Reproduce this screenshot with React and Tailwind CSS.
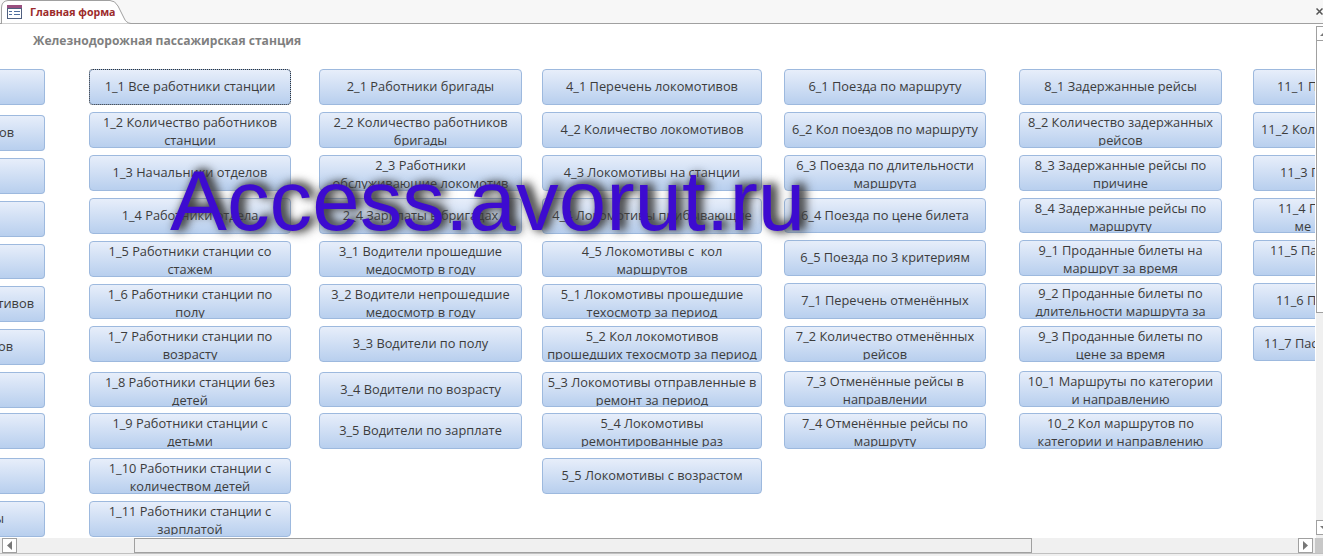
import React from "react";

const columns = [
  {
    width: "w-[202px]",
    items: [
      { lines: ["1_1 Все работники станции"], focus: true },
      { lines: ["1_2 Количество работников", "станции"] },
      { lines: ["1_3 Начальники отделов"] },
      { lines: ["1_4 Работники отдела"] },
      { lines: ["1_5 Работники станции со", "стажем"] },
      { lines: ["1_6 Работники станции по", "полу"], h: "h-[35px]" },
      { lines: ["1_7 Работники станции по", "возрасту"] },
      { lines: ["1_8 Работники станции без", "детей"], h: "h-[35px]", mt: "mt-[3px]" },
      { lines: ["1_9 Работники станции с", "детьми"], mt: "mt-[-1px]" },
      { lines: ["1_10 Работники станции с", "количеством детей"], mt: "mt-[2px]" },
      { lines: ["1_11 Работники станции с", "зарплатой"] },
    ],
  },
  {
    width: "w-[203px]",
    items: [
      { lines: ["2_1 Работники бригады"] },
      { lines: ["2_2 Количество работников", "бригады"] },
      { lines: ["2_3 Работники", "обслуживающие локомотив"] },
      { lines: ["2_4 Зарплаты в бригадах"] },
      { lines: ["3_1 Водители прошедшие", "медосмотр в году"] },
      { lines: ["3_2 Водители непрошедшие", "медосмотр в году"], h: "h-[35px]" },
      { lines: ["3_3 Водители по полу"] },
      { lines: ["3_4 Водители по возрасту"], h: "h-[35px]", mt: "mt-[3px]" },
      { lines: ["3_5 Водители по зарплате"], mt: "mt-[-1px]" },
    ],
  },
  {
    width: "w-[220px]",
    items: [
      { lines: ["4_1 Перечень локомотивов"] },
      { lines: ["4_2 Количество локомотивов"] },
      { lines: ["4_3 Локомотивы на станции"] },
      { lines: ["4_4 Локомотивы прибывающие"] },
      { lines: ["4_5 Локомотивы с  кол", "маршрутов"] },
      { lines: ["5_1 Локомотивы прошедшие", "техосмотр за период"], h: "h-[35px]" },
      { lines: ["5_2 Кол локомотивов", "прошедших техосмотр за период"] },
      { lines: ["5_3 Локомотивы отправленные в", "ремонт за период"], h: "h-[35px]", mt: "mt-[3px]" },
      { lines: ["5_4 Локомотивы", "ремонтированные раз"], mt: "mt-[-1px]" },
      { lines: ["5_5 Локомотивы с возрастом"], mt: "mt-[2px]" },
    ],
  },
  {
    width: "w-[202px]",
    items: [
      { lines: ["6_1 Поезда по маршруту"] },
      { lines: ["6_2 Кол поездов по маршруту"] },
      { lines: ["6_3 Поезда по длительности", "маршрута"] },
      { lines: ["6_4 Поезда по цене билета"], h: "h-[35px]" },
      { lines: ["6_5 Поезда по 3 критериям"] },
      { lines: ["7_1 Перечень отменённых"] },
      { lines: ["7_2 Количество отменённых", "рейсов"] },
      { lines: ["7_3 Отменённые рейсы в", "направлении"], mt: "mt-[2px]" },
      { lines: ["7_4 Отменённые рейсы по", "маршруту"], mt: "mt-[-1px]" },
    ],
  },
  {
    width: "w-[203px]",
    items: [
      { lines: ["8_1 Задержанные рейсы"] },
      { lines: ["8_2 Количество задержанных", "рейсов"] },
      { lines: ["8_3 Задержанные рейсы по", "причине"] },
      { lines: ["8_4 Задержанные рейсы по", "маршруту"], h: "h-[35px]" },
      { lines: ["9_1 Проданные билеты на", "маршрут за время"] },
      { lines: ["9_2 Проданные билеты по", "длительности маршрута за"] },
      { lines: ["9_3 Проданные билеты по", "цене за время"] },
      { lines: ["10_1 Маршруты по категории", "и направлению"], mt: "mt-[2px]" },
      { lines: ["10_2 Кол маршрутов по", "категории и направлению"], mt: "mt-[-1px]" },
    ],
  },
];

// part of the last column is scrolled out of view, only the visible start is kept
const lastColumn = [
  { lines: ["11_1 П"], pl: "pl-[23px]" },
  { lines: ["11_2 Кол"], pl: "pl-[7px]" },
  { lines: ["11_3 П"], pl: "pl-[26px]" },
  { lines: ["11_4 П", "     ме"], pl: "pl-[24px]", h: "h-[35px]" },
  { lines: ["11_5 Па", " "], pl: "pl-[16px]" },
  { lines: ["11_6 П"], pl: "pl-[22px]" },
  { lines: ["11_7 Пас"], pl: "pl-[10px]", h: "h-[35px]" },
];

// same for the first column, only the end of each label is in view
const firstColumn = [
  { text: "", h: "h-9" },
  { text: "ов", pr: "pr-[30px]", h: "h-9", mt: "mt-[3px]" },
  { text: "", h: "h-9" },
  { text: "", h: "h-9" },
  { text: "", h: "h-[35px]" },
  { text: "тивов", pr: "pr-[10px]", h: "h-9" },
  { text: "ов", pr: "pr-[31px]", h: "h-9" },
  { text: "", h: "h-9" },
  { text: "", h: "h-9", mt: "mt-[-2px]" },
  { text: "", h: "h-9", mt: "mt-[2px]" },
  { text: "ы", pr: "pr-[40px]", h: "h-9" },
];

const btn =
  "border border-[#9db9de] rounded-[4px] bg-gradient-to-b from-[#e7eefa] to-[#b8cfee] text-[#3c3c3c] shrink-0";

const FormButton = ({ lines, focus, h = "h-9", mt = "" }) => {
  return (
    <div className={`${btn} ${h} ${mt} relative w-full`}>
      {focus && (
        <div className="absolute inset-[-1px] border border-dotted border-[#333] rounded-[4px]" />
      )}
      <div
        className={`overflow-hidden text-center whitespace-pre leading-[18px] flex flex-col ${
          lines.length === 1 ? "justify-center h-full pb-[2px]" : "h-[33px]"
        }`}
      >
        {lines.map((line) => (
          <div key={line} className="shrink-0">{line}</div>
        ))}
      </div>
    </div>
  );
};

const TabBar = () => {
  return (
    <div className="h-6 shrink-0 bg-[#f7f7f7] border-b border-[#a0a0a0] relative">
      <svg className="absolute left-0 top-0" width="134" height="24" viewBox="0 0 134 24">
        <path
          d="M1.5 24 V8 Q1.5 1 8 .5 H110 Q115 .5 118 6 L124 18 Q126 23 131 23.5 V24 Z"
          fill="#fff"
          stroke="#a0a0a0"
        />
        <rect x="7.5" y="8.5" width="14" height="10" fill="#fff" stroke="#4f5f7f" />
        <rect x="7" y="5" width="15" height="3" fill="#9a4f7f" />
        <path d="M9 11.5h3M9 14.5h3M14 11.5h6M14 14.5h6" stroke="#4f6f9f" />
      </svg>
      <span className="absolute left-[30px] top-[4px] text-[10.6px] leading-[16px] font-bold text-[#9c2b2b] font-['Open_Sans',sans-serif]">
        Главная форма
      </span>
      <svg className="absolute left-[1316px] top-[8px]" width="7" height="7" viewBox="0 0 7 7">
        <path d="M.5 .5l6 6M6.5 .5l-6 6" stroke="#555" strokeWidth="1.5" />
      </svg>
    </div>
  );
};

const Arrow = ({ d, className }) => (
  <svg className={className} width="15" height="15" viewBox="0 0 15 15">
    <path d={d} fill="#777" />
  </svg>
);

const App = () => {
  return (
    <div className="w-[1323px] h-[556px] bg-white overflow-hidden flex flex-col font-['Open_Sans',sans-serif] text-[12.8px] relative">
      <TabBar />

      <div className="flex h-[514px] shrink-0">
        <div className="w-[1316px] overflow-hidden shrink-0">
          <h1 className="pl-[33px] pt-[8px] h-[45px] text-[12.1px] leading-[18px] font-bold text-[#7f7f7f]">
            Железнодорожная пассажирская станция
          </h1>
          <div className="flex">
            <div className="w-[45px] shrink-0 flex flex-col gap-[7px]">
              {firstColumn.map((item, i) => (
                <div
                  key={i}
                  className={`${btn} ${item.h} ${item.mt || ""} ${item.pr || ""} border-l-0 rounded-l-none flex items-center justify-end leading-[18px] pb-[2px]`}
                >
                  {item.text}
                </div>
              ))}
            </div>
            <div className="flex ml-[44px] gap-[28px]">
              {columns.map((col, i) => (
                <div
                  key={i}
                  className={`${col.width} shrink-0 flex flex-col gap-[7px] ${
                    i === 2 ? "ml-[-8px]" : i === 3 ? "ml-[-6px]" : i === 4 ? "ml-[5px]" : ""
                  }`}
                >
                  {col.items.map((item) => (
                    <FormButton key={item.lines[0]} {...item} />
                  ))}
                </div>
              ))}
            </div>
            <div className="ml-[31px] w-[62px] shrink-0 flex flex-col gap-[7px]">
              {lastColumn.map((item) => (
                <div
                  key={item.lines[0]}
                  className={`${btn} ${item.h || "h-9"} ${item.pl} border-r-0 rounded-r-none whitespace-pre leading-[18px] overflow-hidden flex flex-col ${
                    item.lines.length === 1 ? "justify-center pb-[2px]" : ""
                  }`}
                >
                  {item.lines.map((line) => (
                    <div key={line}>{line}</div>
                  ))}
                </div>
              ))}
            </div>
          </div>
        </div>

        <div className="flex-1 flex flex-col">
          <div className="h-[2px] bg-white" />
          <div className="h-[15px] bg-white border border-[#a0a0a0] border-r-0 relative overflow-hidden">
            <Arrow d="M3 9 L7 5 V9 Z" className="absolute left-0 top-0" />
          </div>
          <div className="h-[272px] bg-white border border-t-0 border-[#a0a0a0] border-r-0" />
          <div className="flex-1 bg-[#f0f0f0]" />
          <div className="h-[15px] bg-white border border-[#a0a0a0] border-r-0 relative overflow-hidden">
            <Arrow d="M3 5 H7 V9 Z" className="absolute left-0 top-0" />
          </div>
          <div className="h-[3px] bg-[#f0f0f0]" />
        </div>
      </div>

      <div className="h-[15px] shrink-0 bg-[#f0f0f0] flex items-stretch">
        <div className="w-[15px] ml-[2px] bg-white border border-[#a0a0a0] flex items-center justify-center">
          <svg width="5" height="9" viewBox="0 0 5 9">
            <path d="M5 0 V9 L0 4.5 Z" fill="#777" />
          </svg>
        </div>
        <div className="ml-[117px] w-[898px] border border-[#a0a0a0]" />
        <div className="ml-[266px] w-[15px] bg-white border border-[#a0a0a0] flex items-center justify-center">
          <svg width="5" height="9" viewBox="0 0 5 9">
            <path d="M0 0 V9 L5 4.5 Z" fill="#777" />
          </svg>
        </div>
        <div className="ml-[2px] flex-1 bg-[#c8c8c8]" />
      </div>
      <div className="flex-1 border-t border-[#c0c0c0] bg-[#f0f0f0]" />

      {/* site watermark over the form */}
      <div className="absolute left-[170px] top-[152px] text-[85.3px] leading-[98px] whitespace-nowrap font-['Liberation_Sans',sans-serif] text-[#3d0bd0] [text-shadow:4px_-1px_9px_#333,5px_0_12px_#555] pointer-events-none">
        Access.avorut.ru
      </div>
    </div>
  );
};

export default App;
